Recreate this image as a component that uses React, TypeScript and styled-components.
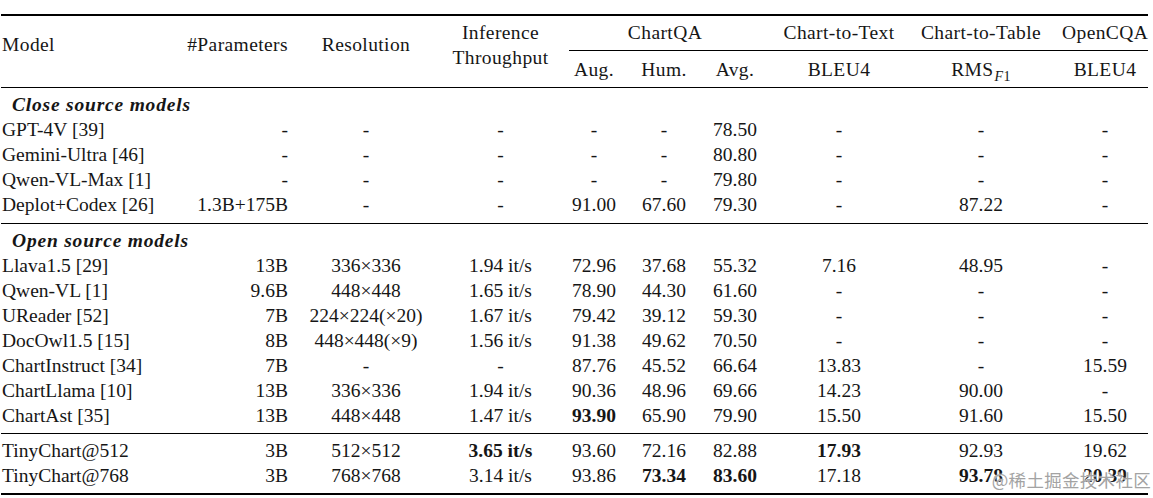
import React from "react";
import styled, { createGlobalStyle } from "styled-components";

const GlobalStyle = createGlobalStyle`
  html, body {
    margin: 0;
    padding: 0;
    background: #fff;
  }
`;

const Page = styled.div`
  position: relative;
  width: 1153px;
  height: 498px;
  box-sizing: border-box;
  padding: 14px 0 0 1px;
  overflow: hidden;
  background: #fff;
`;

const Table = styled.table`
  width: 1147px;
  table-layout: fixed;
  border-collapse: collapse;
  font-family: "Liberation Serif", "Times New Roman", serif;
  font-size: 19.5px;
  color: #161616;
  border-top: 2px solid #000;
  border-bottom: 2px solid #000;
`;

type Align = "left" | "right" | "center";

const COLS: { w: number; align: Align; pl: number; pr: number }[] = [
  { w: 169, align: "left", pl: 1, pr: 0 },
  { w: 130, align: "right", pl: 0, pr: 12 },
  { w: 132, align: "center", pl: 0, pr: 0 },
  { w: 137, align: "center", pl: 0, pr: 0 },
  { w: 50, align: "center", pl: 0, pr: 0 },
  { w: 90, align: "center", pl: 0, pr: 0 },
  { w: 52, align: "center", pl: 0, pr: 0 },
  { w: 156, align: "center", pl: 0, pr: 0 },
  { w: 128, align: "center", pl: 0, pr: 0 },
  { w: 103, align: "center", pl: 17, pr: 0 },
];

const Head = styled.th<{
  $align?: Align;
  $top: number;
  $bottom: number;
  $rule?: boolean;
  $pl?: number;
  $pr?: number;
}>`
  font-weight: normal;
  white-space: nowrap;
  vertical-align: top;
  line-height: 25px;
  letter-spacing: 0.4px;
  text-align: ${(p) => p.$align || "center"};
  padding: ${(p) => `${p.$top}px ${p.$pr || 0}px ${p.$bottom}px ${p.$pl || 0}px`};
  border-bottom: ${(p) => (p.$rule ? "1px solid #000" : "none")};
`;

const Cell = styled.td<{
  $align: Align;
  $pl: number;
  $pr: number;
  $top: number;
  $bottom: number;
  $bold: boolean;
}>`
  white-space: nowrap;
  vertical-align: top;
  line-height: 25px;
  height: 25px;
  text-align: ${(p) => p.$align};
  padding: ${(p) => `${p.$top}px ${p.$pr}px ${p.$bottom}px ${p.$pl}px`};
  font-weight: ${(p) => (p.$bold ? "bold" : "normal")};
`;

const RuleRow = styled.tr<{ $rule?: boolean }>`
  border-bottom: ${(p) => (p.$rule ? "1px solid #000" : "none")};
`;

const Section = styled.td`
  padding: 4px 0 0 11px;
  line-height: 25px;
  height: 25px;
  vertical-align: top;
  font-weight: bold;
  font-style: italic;
  letter-spacing: 0.8px;
  white-space: nowrap;
`;

const Sub = styled.span`
  font-size: 14px;
  position: relative;
  top: 5px;
  margin-left: 1px;

  i {
    font-style: italic;
  }
`;

const Watermark = styled.span`
  position: absolute;
  right: 2px;
  bottom: 8px;
  font-family: "Noto Sans CJK SC", "Noto Sans", sans-serif;
  font-size: 17.5px;
  line-height: 20px;
  color: #a3a3a3;
  text-shadow: 0 0 1px #fff, 0 0 2px #fff;
  letter-spacing: 0.3px;
`;

const closeRows = [
  ["GPT-4V [39]", "-", "-", "-", "-", "-", "78.50", "-", "-", "-"],
  ["Gemini-Ultra [46]", "-", "-", "-", "-", "-", "80.80", "-", "-", "-"],
  ["Qwen-VL-Max [1]", "-", "-", "-", "-", "-", "79.80", "-", "-", "-"],
  ["Deplot+Codex [26]", "1.3B+175B", "-", "-", "91.00", "67.60", "79.30", "-", "87.22", "-"],
];

const openRows = [
  ["Llava1.5 [29]", "13B", "336×336", "1.94 it/s", "72.96", "37.68", "55.32", "7.16", "48.95", "-"],
  ["Qwen-VL [1]", "9.6B", "448×448", "1.65 it/s", "78.90", "44.30", "61.60", "-", "-", "-"],
  ["UReader [52]", "7B", "224×224(×20)", "1.67 it/s", "79.42", "39.12", "59.30", "-", "-", "-"],
  ["DocOwl1.5 [15]", "8B", "448×448(×9)", "1.56 it/s", "91.38", "49.62", "70.50", "-", "-", "-"],
  ["ChartInstruct [34]", "7B", "-", "-", "87.76", "45.52", "66.64", "13.83", "-", "15.59"],
  ["ChartLlama [10]", "13B", "336×336", "1.94 it/s", "90.36", "48.96", "69.66", "14.23", "90.00", "-"],
  ["ChartAst [35]", "13B", "448×448", "1.47 it/s", "**93.90", "65.90", "79.90", "15.50", "91.60", "15.50"],
];

// "**" marks a bold (best) value
const oursRows = [
  ["TinyChart@512", "3B", "512×512", "**3.65 it/s", "93.60", "72.16", "82.88", "**17.93", "92.93", "19.62"],
  ["TinyChart@768", "3B", "768×768", "3.14 it/s", "93.86", "**73.34", "**83.60", "17.18", "**93.78", "**20.39"],
];

const DataRow = ({
  row,
  top = 0,
  bottom = 0,
  rule = false,
}: {
  row: string[];
  top?: number;
  bottom?: number;
  rule?: boolean;
}) => (
  <RuleRow $rule={rule}>
    {row.map((v, i) => {
      const bold = v.startsWith("**");
      return (
        <Cell
          key={i}
          $align={COLS[i].align}
          $pl={COLS[i].pl}
          $pr={COLS[i].pr}
          $top={top}
          $bottom={bottom}
          $bold={bold}
        >
          {bold ? v.slice(2) : v}
        </Cell>
      );
    })}
  </RuleRow>
);

export default function App() {
  return (
    <Page>
      <GlobalStyle />
      <Table>
        <colgroup>
          {COLS.map((c, i) => (
            <col key={i} style={{ width: c.w }} />
          ))}
        </colgroup>
        <thead>
          <tr>
            <Head rowSpan={2} $align="left" $pl={1} $top={16} $bottom={0} $rule>
              Model
            </Head>
            <Head rowSpan={2} $align="right" $pr={12} $top={16} $bottom={0} $rule>
              #Parameters
            </Head>
            <Head rowSpan={2} $top={16} $bottom={0} $rule>
              Resolution
            </Head>
            <Head rowSpan={2} $top={4} $bottom={0} $rule>
              Inference
              <br />
              Throughput
            </Head>
            <Head colSpan={3} $top={4} $bottom={5} $rule>
              ChartQA
            </Head>
            <Head $top={4} $bottom={5} $rule>
              Chart-to-Text
            </Head>
            <Head $top={4} $bottom={5} $rule>
              Chart-to-Table
            </Head>
            <Head $top={4} $bottom={5} $pl={17} $rule>
              OpenCQA
            </Head>
          </tr>
          <tr>
            <Head $top={6} $bottom={3} $rule>Aug.</Head>
            <Head $top={6} $bottom={3} $rule>Hum.</Head>
            <Head $top={6} $bottom={3} $rule>Avg.</Head>
            <Head $top={6} $bottom={3} $rule>BLEU4</Head>
            <Head $top={6} $bottom={3} $rule>
              RMS
              <Sub>
                <i>F</i>1
              </Sub>
            </Head>
            <Head $top={6} $bottom={3} $pl={17} $rule>BLEU4</Head>
          </tr>
        </thead>
        <tbody>
          <tr>
            <Section colSpan={10}>Close source models</Section>
          </tr>
          {closeRows.map((r, i) => (
            <DataRow
              key={r[0]}
              row={r}
              bottom={i === closeRows.length - 1 ? 6 : 0}
              rule={i === closeRows.length - 1}
            />
          ))}
          <tr>
            <Section colSpan={10}>Open source models</Section>
          </tr>
          {openRows.map((r, i) => (
            <DataRow
              key={r[0]}
              row={r}
              bottom={i === openRows.length - 1 ? 5 : 0}
              rule={i === openRows.length - 1}
            />
          ))}
          {oursRows.map((r, i) => (
            <DataRow
              key={r[0]}
              row={r}
              top={i === 0 ? 4 : 0}
              bottom={i === oursRows.length - 1 ? 5 : 0}
            />
          ))}
        </tbody>
      </Table>
      <Watermark>@稀土掘金技术社区</Watermark>
    </Page>
  );
}
